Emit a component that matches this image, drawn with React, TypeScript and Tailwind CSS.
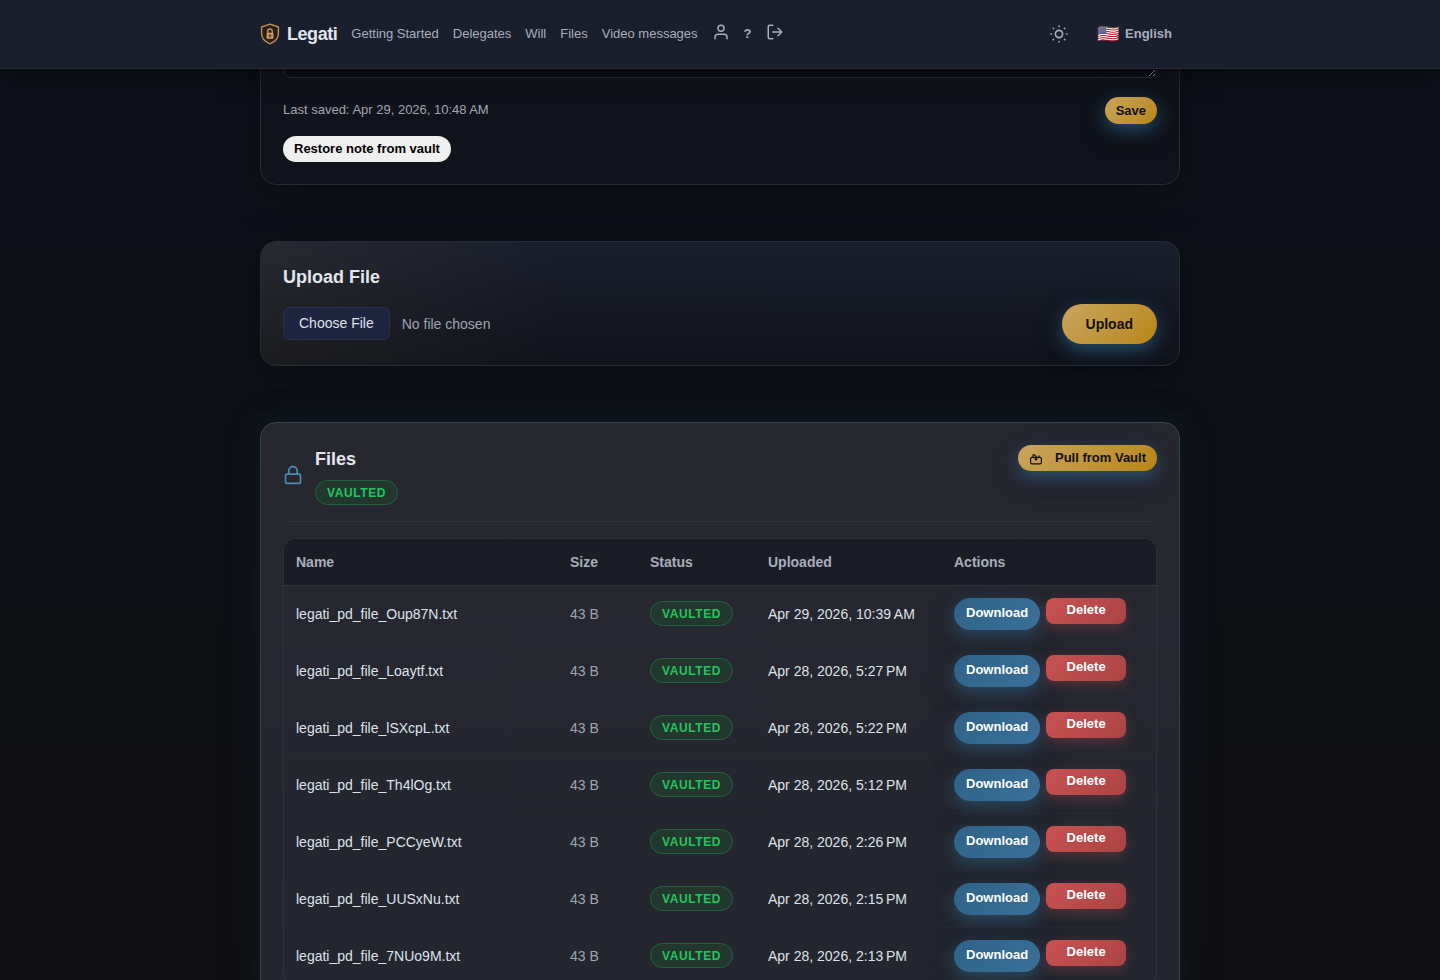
import { useState } from "react";

const NAV_LINKS = ["Getting Started", "Delegates", "Will", "Files", "Video messages"];

const FILES = [
  { name: "legati_pd_file_Oup87N.txt", size: "43 B", uploaded: "Apr 29, 2026, 10:39\u202fAM" },
  { name: "legati_pd_file_Loaytf.txt", size: "43 B", uploaded: "Apr 28, 2026, 5:27\u202fPM" },
  { name: "legati_pd_file_lSXcpL.txt", size: "43 B", uploaded: "Apr 28, 2026, 5:22\u202fPM" },
  { name: "legati_pd_file_Th4lOg.txt", size: "43 B", uploaded: "Apr 28, 2026, 5:12\u202fPM" },
  { name: "legati_pd_file_PCCyeW.txt", size: "43 B", uploaded: "Apr 28, 2026, 2:26\u202fPM" },
  { name: "legati_pd_file_UUSxNu.txt", size: "43 B", uploaded: "Apr 28, 2026, 2:15\u202fPM" },
  { name: "legati_pd_file_7NUo9M.txt", size: "43 B", uploaded: "Apr 28, 2026, 2:13\u202fPM" },
];

const goldButton =
  "rounded-full bg-linear-135 from-[#c9a55c] to-[#b8860b] font-bold text-[#12100c] shadow-[0_6px_18px_rgba(64,140,190,0.5),0_8px_32px_rgba(0,0,0,0.3)]";

function ShieldLogo() {
  return (
    <svg width="20" height="22" viewBox="0 0 20 22" fill="none" aria-hidden="true">
      <path
        d="M10 1.2 18.4 4v6.6c0 4.6-3.2 8.2-8.4 10.2C4.8 18.8 1.6 15.2 1.6 10.6V4L10 1.2Z"
        fill="#2b1f14"
        stroke="#b99058"
        strokeWidth="1.4"
        strokeLinejoin="round"
      />
      <path d="M7.8 10V8a2.2 2.2 0 0 1 4.4 0v2" stroke="#d0a068" strokeWidth="1.3" />
      <rect x="6.6" y="9.8" width="6.8" height="6" rx="0.8" fill="#cf9c66" />
      <path d="M10 11v3.6M8.4 12.8h3.2" stroke="#4a3018" strokeWidth="0.9" />
    </svg>
  );
}

function UserIcon() {
  return (
    <svg width="18" height="18" viewBox="0 0 24 24" fill="none" stroke="currentColor" strokeWidth="2" strokeLinecap="round" strokeLinejoin="round" aria-hidden="true">
      <path d="M20 21v-2a4 4 0 0 0-4-4H8a4 4 0 0 0-4 4v2" />
      <circle cx="12" cy="7" r="4" />
    </svg>
  );
}

function LogoutIcon() {
  return (
    <svg width="18" height="18" viewBox="0 0 24 24" fill="none" stroke="currentColor" strokeWidth="2" strokeLinecap="round" strokeLinejoin="round" aria-hidden="true">
      <path d="M9 21H5a2 2 0 0 1-2-2V5a2 2 0 0 1 2-2h4" />
      <path d="m16 17 5-5-5-5M21 12H9" />
    </svg>
  );
}

function SunIcon() {
  return (
    <svg width="18" height="18" viewBox="0 0 24 24" fill="none" stroke="currentColor" strokeWidth="2.2" strokeLinecap="round" aria-hidden="true">
      <circle cx="12" cy="12" r="4.8" />
      <path d="M12 1.4v.5M12 22.1v.5M1.4 12h.5M22.1 12h.5M4.4 4.4l.3.3M19.3 19.3l.3.3M4.4 19.6l.3-.3M19.3 4.7l.3-.3" />
    </svg>
  );
}

function LockIcon() {
  return (
    <svg width="20" height="20" viewBox="0 0 24 24" fill="none" stroke="currentColor" strokeWidth="2" strokeLinecap="round" strokeLinejoin="round" aria-hidden="true">
      <rect x="3" y="11" width="18" height="11" rx="2" />
      <path d="M7 11V7a5 5 0 0 1 10 0v4" />
    </svg>
  );
}

function PullIcon() {
  return (
    <svg width="14" height="14" viewBox="0 0 14 14" fill="none" stroke="currentColor" strokeWidth="1.2" strokeLinecap="round" strokeLinejoin="round" aria-hidden="true">
      <rect x="1.6" y="6.4" width="10.8" height="6.4" rx="1.2" />
      <path d="M4 6.2V4.8a1 1 0 0 1 2-.3M10 6.2V4.8" />
      <path d="M7 5v4M6 8l1 1 1-1" />
    </svg>
  );
}

function VaultedBadge() {
  return (
    <span className="inline-flex h-[25px] items-center rounded-full border border-[#22613f] bg-[#22382f] px-[11px] text-xs font-bold tracking-wider text-[#22c55e]">
      VAULTED
    </span>
  );
}

function Header() {
  return (
    <header className="relative z-10 border-b border-[#252b3b] bg-[#1a1f2e] shadow-[0_4px_24px_rgba(0,0,0,0.5)]">
      <div className="mx-auto flex h-[68px] max-w-[920px] items-center justify-between">
        <nav className="flex items-center gap-[14px] text-[13px] text-[#a9aebb]">
          <a href="#home" className="flex items-center gap-[7px] text-lg font-bold tracking-tight text-[#e2e5ee]">
            <ShieldLogo />
            Legati
          </a>
          {NAV_LINKS.map((label) => (
            <a key={label} href={`#${label.toLowerCase().replace(" ", "-")}`}>
              {label}
            </a>
          ))}
          <a href="#profile" aria-label="Profile" className="pb-1">
            <UserIcon />
          </a>
          <a href="#help" className="font-bold">
            ?
          </a>
          <a href="#logout" aria-label="Log out" className="pb-1">
            <LogoutIcon />
          </a>
        </nav>
        <div className="flex items-center gap-[29px] pr-2 text-[#a9aebb]">
          <button type="button" aria-label="Toggle theme">
            <SunIcon />
          </button>
          <button type="button" className="flex items-center gap-[6px] text-[13px] font-bold">
            <span className="text-lg leading-5">🇺🇸</span>
            English
          </button>
        </div>
      </div>
    </header>
  );
}

function NoteCard() {
  const [note, setNote] = useState("");

  return (
    <section className="rounded-2xl border border-[#262932] bg-[#10131b] p-[22px] shadow-[0_8px_40px_rgba(0,0,0,0.25)]">
      <textarea
        aria-label="Note"
        value={note}
        onChange={(e) => setNote(e.target.value)}
        className="block h-20 w-full resize-y rounded-lg border border-[#2a2d37] bg-[#0c0f17] p-3 text-sm text-[#e2e5ee]"
      />
      <div className="mt-[19px] flex items-start justify-between">
        <p className="pt-1 text-[13px] leading-[18px] text-[#a0a5b1]">Last saved: Apr 29, 2026, 10:48{"\u202f"}AM</p>
        <button type="button" className={`h-[27px] px-[11px] text-[13px] ${goldButton}`}>
          Save
        </button>
      </div>
      <button type="button" className="mt-3 block h-[26px] rounded-full bg-[#efefef] px-[11px] text-[13px] font-bold text-black">
        Restore note from vault
      </button>
    </section>
  );
}

function UploadCard() {
  return (
    <section className="rounded-2xl border border-[#262b38] bg-[radial-gradient(ellipse_300px_500px_at_top_left,rgba(201,165,92,0.08),transparent),linear-gradient(180deg,#1a1f2e,#10131b)] px-[22px] pt-[22px] pb-[21px] shadow-[0_8px_40px_rgba(0,0,0,0.25)]">
      <h2 className="mb-[14px] text-lg leading-[26px] font-bold text-[#e2e5ee]">Upload File</h2>
      <form className="flex items-center justify-between" onSubmit={(e) => e.preventDefault()}>
        <input
          type="file"
          aria-label="File to upload"
          className="pb-0.5 text-sm text-[#a0a5b1] file:mr-3 file:h-[33px] file:rounded-md file:border file:border-solid file:border-[#2a3050] file:bg-[#20253f] file:px-[15px] file:text-sm file:text-[#dfe2ec]"
        />
        <button type="submit" className={`h-10 px-6 text-sm ${goldButton}`}>
          Upload
        </button>
      </form>
    </section>
  );
}

function FilesCard() {
  return (
    <section className="rounded-2xl border border-[#37444f] bg-linear-to-b from-[#272730] to-[#23262f] p-[22px] shadow-[0_0_40px_rgba(74,144,184,0.12),0_8px_40px_rgba(0,0,0,0.25)]">
      <div className="mb-4 flex items-start justify-between border-b border-[#2e3039] pb-4">
        <div className="flex items-center gap-3">
          <span className="text-[#4a8db5]">
            <LockIcon />
          </span>
          <div className="flex flex-col items-start gap-[7px]">
            <h2 className="text-lg leading-7 font-bold text-[#e2e5ee]">Files</h2>
            <VaultedBadge />
          </div>
        </div>
        <button type="button" className={`flex h-[26px] items-center gap-3 px-[11px] text-[13px] ${goldButton}`}>
          <PullIcon />
          Pull from Vault
        </button>
      </div>
      <div className="overflow-hidden rounded-xl border border-[#2e323b]">
        <table className="w-full table-fixed text-left text-sm">
          <colgroup>
            <col className="w-[274px]" />
            <col className="w-[80px]" />
            <col className="w-[118px]" />
            <col className="w-[186px]" />
            <col />
          </colgroup>
          <thead className="bg-[#1b1d26] text-[#a9aebb]">
            <tr className="h-[46px] border-b border-[#30343d]">
              <th className="px-3">Name</th>
              <th className="px-3">Size</th>
              <th className="px-3">Status</th>
              <th className="px-3">Uploaded</th>
              <th className="px-3">Actions</th>
            </tr>
          </thead>
          <tbody>
            {FILES.map((file) => (
              <tr key={file.name} className="h-[57px] border-b border-[#282a33] text-[#dfe2ea]">
                <td className="px-3">{file.name}</td>
                <td className="px-3 text-[#a0a5b1]">{file.size}</td>
                <td className="px-3">
                  <VaultedBadge />
                </td>
                <td className="px-3">{file.uploaded}</td>
                <td className="px-3">
                  <div className="flex items-start gap-[6px]">
                    <button
                      type="button"
                      className="h-8 rounded-full bg-linear-135 from-[#2f6288] to-[#3a7099] px-3 text-[13px] font-bold text-white shadow-[0_6px_18px_rgba(64,140,190,0.4),0_8px_32px_rgba(0,0,0,0.25)]"
                    >
                      Download
                    </button>
                    <button
                      type="button"
                      className="h-[26px] w-20 rounded-lg bg-linear-135 from-[#c95252] to-[#ab4444] text-[13px] font-bold text-white shadow-[0_4px_12px_rgba(200,80,80,0.3)]"
                    >
                      Delete
                    </button>
                  </div>
                </td>
              </tr>
            ))}
          </tbody>
        </table>
      </div>
    </section>
  );
}

export default function App() {
  return (
    <div className="h-screen overflow-hidden bg-linear-to-b from-[#0c101a] to-[#0f0f11] font-['Liberation_Sans',Arial,sans-serif]">
      <Header />
      <main className="mx-auto -mt-[94px] flex max-w-[920px] flex-col gap-14">
        <NoteCard />
        <UploadCard />
        <FilesCard />
      </main>
    </div>
  );
}
